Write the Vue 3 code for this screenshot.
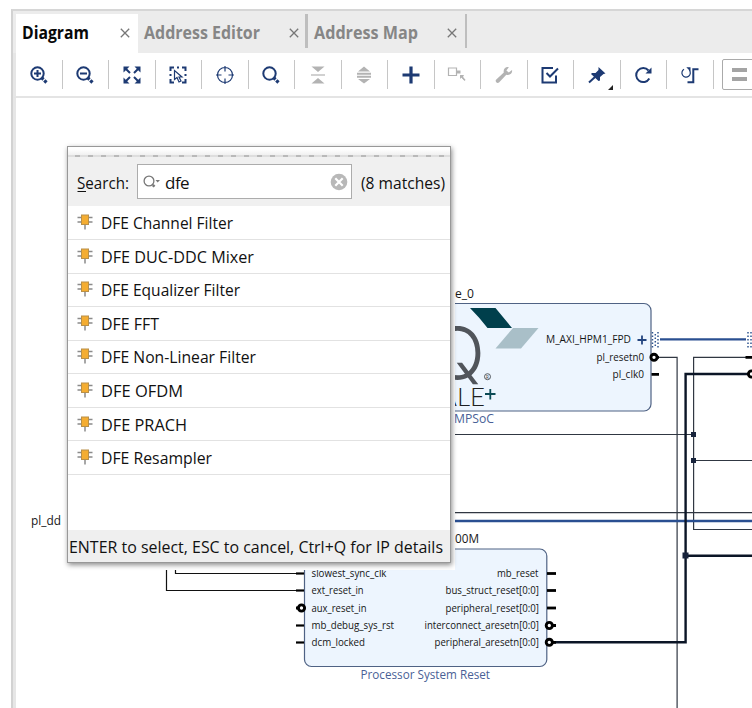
<template>
  <div class="window">
    <nav class="tabs">
      <div
        v-for="tab in tabs"
        :key="tab.title"
        :class="['tab', tab.name, { active: tab.title === activeTab }]"
        @click="activeTab = tab.title"
      >
        <svg class="tab-title" height="26" :width="tab.width">
          <text x="0" y="19" :textLength="tab.width" lengthAdjust="spacingAndGlyphs">{{ tab.title }}</text>
        </svg>
        <svg class="close" viewBox="0 0 10 10"><path d="M0.8 0.8L9.2 9.2M9.2 0.8L0.8 9.2" /></svg>
      </div>
    </nav>

    <div class="toolbar">
      <div v-for="tool in tools" :key="tool.name" class="tool">
        <svg viewBox="0 0 20 20" :class="['icon', { disabled: tool.disabled }]">
          <path v-if="tool.thin" :d="tool.thin" class="thin" />
          <path v-if="tool.line" :d="tool.line" class="line" />
          <path v-if="tool.bold" :d="tool.bold" class="bold" />
          <path v-if="tool.fill" :d="tool.fill" class="fill" />
        </svg>
        <i v-if="tool.menu" class="corner"></i>
      </div>
      <div class="view-switch"><i></i><i></i></div>
    </div>

    <main class="canvas">
      <svg class="diagram" viewBox="16 98 736 610">
        <!-- blocks -->
        <rect class="block" x="400.5" y="303.5" width="250.5" height="107.5" rx="7" />
        <rect class="block" x="304.5" y="549" width="242.3" height="117.5" rx="7" />

        <!-- logo on the processor block -->
        <path d="M470 308H495.500L512 328H487.500Q479 317 470 308Z" fill="#003f4c" />
        <path d="M513 328H538.500L521 348.500H495.500Z" fill="#a9bfc8" />
        <text class="logo-q" x="430" y="378.500" textLength="55" lengthAdjust="spacingAndGlyphs">Q</text>
        <circle cx="487.500" cy="376.700" r="3" fill="none" stroke="#444a50" stroke-width="0.9" />
        <text x="486" y="378.500" class="reg">R</text>
        <text class="logo-ale" x="440" y="405.500" textLength="45" lengthAdjust="spacingAndGlyphs">ALE</text>
        <path d="M485 394H495.500M490.300 389V399.500" stroke="#0b4a55" stroke-width="1.8" />

        <!-- wires -->
        <path class="wire" d="M658 357.300H677.100V708" />
        <path class="wire" d="M752 357.300H693.600V529.500H752M440 434.500H693.600M693.600 460.500H752M440 512.600H752" />
        <path class="wire dark" d="M175.500 560V573.500H300M166.500 560V590.500H300" />
        <path class="bus" d="M660 339.300H746" />
        <path class="bus" d="M440 521H752" />
        <path class="thick" d="M552 642.300H685.600V374H749M685.600 555.700H752" />
        <rect class="joint" x="691" y="432" width="5" height="5" />
        <rect class="joint" x="691" y="458" width="5" height="5" />
        <rect class="joint" x="682.500" y="552.500" width="6" height="6" />

        <!-- pins -->
        <path class="pin" d="M651.500 374.300H659M745.500 357.300H752" />
        <path v-for="y in [573.500, 590.500, 608]" :key="`r${y}`" class="pin" :d="`M547 ${y}H556`" />
        <path v-for="y in [573.500, 590.500, 625.500, 642.500]" :key="`l${y}`" class="pin left" :d="`M296 ${y}H304`" />
        <path class="pin" d="M296 608H300M552 625.500H556M552 642.300H556M656 357.300H659" />
        <circle v-for="c in invertedPins" :key="`${c.x}-${c.y}`" class="inverted" :cx="c.x" :cy="c.y" r="3.100" />
        <path class="expand" d="M637.500 340H646.500M642 335.500V344.500" />
        <path class="dots" d="M652.500 332V348M658 332V348M655.300 334V347M748 332V348M751 332V348" />

        <!-- labels -->
        <text
          v-for="l in labels"
          :key="l.text"
          :x="l.x"
          :y="l.y"
          :class="l.kind"
          :textLength="l.w"
          lengthAdjust="spacingAndGlyphs"
        >{{ l.text }}</text>

        <rect x="61" y="140" width="394" height="430" fill="#fff" />
      </svg>

      <section class="popup">
        <div class="grip"></div>
        <header class="search">
          <svg class="search-label" width="53" height="26">
            <text x="0" y="19" textLength="52" lengthAdjust="spacingAndGlyphs">Search:</text>
            <path d="M0.500 21.500H9" stroke="#111" />
          </svg>
          <div class="field">
            <svg class="lens" viewBox="0 0 18 16">
              <circle cx="6" cy="7" r="4.900" />
              <path d="M9.800 11L11.500 12.700" stroke-width="2.500" />
              <path d="M12.500 6H17L14.700 8.500Z" fill="#777" stroke="none" />
            </svg>
            <input v-model="query" spellcheck="false" />
            <svg class="clear" viewBox="0 0 18 18" @click="query = ''">
              <circle cx="9" cy="9" r="8.300" />
              <path d="M5.300 5.300L12.700 12.700M12.700 5.300L5.300 12.700" />
            </svg>
          </div>
          <svg class="count" width="84" height="26">
            <text x="0" y="19" textLength="84" lengthAdjust="spacingAndGlyphs">({{ matches.length }} matches)</text>
          </svg>
        </header>
        <ul class="results">
          <li v-for="item in matches" :key="item.name">
            <svg class="chip" viewBox="0 0 16 16">
              <path d="M0.500 3.500H15.500M0.500 8H15.500M8 10V15.500" />
              <rect x="4.500" y="1" width="7" height="9.500" />
            </svg>
            <svg height="26" :width="item.width + 2">
              <text x="0" y="19" :textLength="item.width" lengthAdjust="spacingAndGlyphs">{{ item.name }}</text>
            </svg>
          </li>
        </ul>
        <footer class="hint">
          <svg width="376" height="26">
            <text x="0" y="19" textLength="374" lengthAdjust="spacingAndGlyphs">ENTER to select, ESC to cancel, Ctrl+Q for IP details</text>
          </svg>
        </footer>
      </section>
    </main>
  </div>
</template>

<script setup>
import { computed, ref } from 'vue';

const activeTab = ref('Diagram');
const query = ref('dfe');

const tabs = [
  { name: 'diagram-tab', title: 'Diagram', width: 67 },
  { name: 'editor-tab', title: 'Address Editor', width: 116 },
  { name: 'map-tab', title: 'Address Map', width: 104 },
];

const lens = 'M8.500 2.300A6.200 6.200 0 1 1 8.500 14.700A6.200 6.200 0 1 1 8.500 2.300';
const handle = 'M13 13L14.500 14.500M15.300 15.300L17.500 17.500';

const tools = [
  { name: 'zoom-in', line: `${lens}M5 8.500H12M8.500 5V12`, bold: handle },
  { name: 'zoom-out', line: `${lens}M5 8.500H12`, bold: handle },
  {
    name: 'fit',
    line: 'M3 3L8 8M17 3L12 8M3 17L8 12M17 17L12 12',
    fill: 'M1.500 1.500H7.500L1.500 7.500ZM18.500 1.500V7.500L12.500 1.500ZM1.500 18.500V12.500L7.500 18.500ZM18.500 18.500H12.500L18.500 12.500Z',
  },
  {
    name: 'select-area',
    line: 'M2.500 6V2.500H6M14 2.500H17.500V6M17.500 14V17.500H14M6 17.500H2.500V14M2.500 9V11M17.500 9V11M9 2.500H11',
    thin: 'M6.500 5.500V14.500L9 12.500L11 17L13 16L11 12H14Z',
  },
  { name: 'center', thin: 'M10 2.500A7.500 7.500 0 1 1 10 17.500A7.500 7.500 0 1 1 10 2.500M10 1V6.500M10 13.500V19M1 10H6.500M13.500 10H19' },
  { name: 'find', line: lens, bold: handle },
  { name: 'collapse', disabled: true, thin: 'M3 10H17', fill: 'M3.500 1.500H16.500L10 7ZM3.500 18.500H16.500L10 13Z' },
  { name: 'expand', disabled: true, line: 'M3 8.700H17M3 11.700H17', fill: 'M4 6.500H16L10 1.500ZM4 14H16L10 18.500Z' },
  { name: 'add', bold: 'M1.500 10H18.500M10 1.500V18.500' },
  { name: 'make-external', disabled: true, thin: 'M1.500 3H9.500V10.500H1.500ZM10 7H13M14 11L18 15.500', fill: 'M10 5.500H13.500V8.500H10ZM13 10H17L16 12L18.500 15H17L14.500 12.500L13 14Z' },
  { name: 'settings', disabled: true, fill: 'M18 5L14.800 7.500L12.400 5.500L14.800 2.200C11.500 1.500 9 4 9.800 7.500L2 14.700C0.800 16.500 3 19 5 17.500L12.300 9.800C16 10.700 18.800 8.200 18 5Z' },
  { name: 'validate', line: 'M13 3H2.500V17.500H16V10.500M6.500 8L10 11.500L18 3.500' },
  { name: 'pin', menu: true, line: 'M2 17.500L8 12', fill: 'M11.500 2L18.500 8.500L16.500 9L13 12L13 15.500L11.500 16L4 9L5 8L8.500 8L11.500 5Z' },
  { name: 'refresh', line: 'M16.300 13.500A7 7 0 1 1 15.500 5.500', fill: 'M18.500 2.500V8.500H12.500Z' },
  { name: 'regenerate', line: 'M7.500 17.300H13.300V4.200H18.500', thin: 'M4 4.300A4.200 4.200 0 1 0 9.300 5.200', fill: 'M6.300 2.300H10.500V6.500Z' },
];

const catalog = [
  { name: 'DFE Channel Filter', width: 132 },
  { name: 'DFE DUC-DDC Mixer', width: 153 },
  { name: 'DFE Equalizer Filter', width: 139 },
  { name: 'DFE FFT', width: 58 },
  { name: 'DFE Non-Linear Filter', width: 155 },
  { name: 'DFE OFDM', width: 82 },
  { name: 'DFE PRACH', width: 86 },
  { name: 'DFE Resampler', width: 111 },
];
const matches = computed(() =>
  catalog.filter((item) => item.name.toLowerCase().includes(query.value.toLowerCase()))
);

const invertedPins = [
  { x: 654, y: 357.3 },
  { x: 751.5, y: 374 },
  { x: 301.5, y: 608 },
  { x: 549.3, y: 625.5 },
  { x: 549.3, y: 642.3 },
];

const labels = [
  { text: 'e_0', x: 455, y: 298, w: 19, kind: 'name' },
  { text: '00M', x: 455, y: 543, w: 24, kind: 'name' },
  { text: 'pl_dd', x: 31, y: 525, w: 30, kind: 'name' },
  { text: 'MPSoC', x: 454, y: 423, w: 40, kind: 'caption' },
  { text: 'Processor System Reset', x: 360.5, y: 679, w: 129.5, kind: 'caption' },
  { text: 'M_AXI_HPM1_FPD', x: 546, y: 343, w: 85, kind: 'port' },
  { text: 'pl_resetn0', x: 596.5, y: 360.5, w: 47.5, kind: 'port' },
  { text: 'pl_clk0', x: 612.5, y: 378, w: 31.5, kind: 'port' },
  { text: 'slowest_sync_clk', x: 311.5, y: 577, w: 75, kind: 'port' },
  { text: 'ext_reset_in', x: 311.5, y: 594, w: 52, kind: 'port' },
  { text: 'aux_reset_in', x: 311.5, y: 611.5, w: 55, kind: 'port' },
  { text: 'mb_debug_sys_rst', x: 311.5, y: 629, w: 82.5, kind: 'port' },
  { text: 'dcm_locked', x: 311.5, y: 646, w: 53.5, kind: 'port' },
  { text: 'mb_reset', x: 497, y: 577, w: 41.5, kind: 'port' },
  { text: 'bus_struct_reset[0:0]', x: 445.5, y: 594, w: 93.5, kind: 'port' },
  { text: 'peripheral_reset[0:0]', x: 445.5, y: 611.5, w: 93.5, kind: 'port' },
  { text: 'interconnect_aresetn[0:0]', x: 424.5, y: 629, w: 114.5, kind: 'port' },
  { text: 'peripheral_aresetn[0:0]', x: 434.5, y: 646, w: 104.5, kind: 'port' },
];
</script>

<style>
body {
  overflow: hidden;
  background: #fff;
}
</style>

<style scoped>
.window {
  box-sizing: border-box;
  width: 741px;
  height: 699px;
  margin: 9px 0 0 11px;
  border-top: 2px solid #d6d6d6;
  border-left: 2px solid #d2d2d2;
  display: flex;
  flex-direction: column;
  font-family: 'Open Sans', 'Noto Sans', sans-serif;
}
.tabs {
  display: flex;
  box-sizing: border-box;
  height: 42px;
  padding: 3px 0 0 3px;
  background: #ececec;
}
.tab {
  display: flex;
  align-items: center;
  justify-content: space-between;
  box-sizing: border-box;
  height: 34px;
  padding: 4px 8px 0 6px;
  border-right: 3px solid #bebebe;
}
.tab.active {
  height: 39px;
  padding-bottom: 5px;
  background: #fff;
  border-right: 0;
}
.diagram-tab {
  width: 122px;
}
.editor-tab {
  width: 170px;
  padding-right: 6.500px;
}
.map-tab {
  width: 159px;
  border-right-width: 2px;
}
.tab-title {
  overflow: visible;
  font-size: 17.500px;
  font-weight: 700;
  fill: #868686;
}
.active .tab-title {
  fill: #080808;
}
.close {
  width: 10px;
  height: 10px;
  fill: none;
  stroke: #777;
  stroke-width: 1.3;
}
.toolbar {
  display: flex;
  align-items: center;
  box-sizing: border-box;
  height: 45px;
  border-left: 3px solid #e6e6e6;
  border-bottom: 2px solid #e4e4e4;
  overflow: hidden;
}
.tool {
  position: relative;
  display: flex;
  flex: none;
  align-items: center;
  justify-content: center;
  box-sizing: border-box;
  width: 46.520px;
  height: 29px;
  border-right: 1px solid #c6c6c6;
}
.icon {
  width: 20px;
  height: 20px;
  color: #1d3a73;
}
.icon.disabled {
  color: #b3b3b3;
}
.icon path {
  fill: none;
  stroke: currentColor;
  stroke-width: 2;
}
.icon .thin {
  stroke-width: 1.2;
}
.icon .bold {
  stroke-width: 3.2;
}
.icon .fill {
  fill: currentColor;
  stroke: none;
}
.corner {
  position: absolute;
  right: 7px;
  bottom: -1px;
  border-left: 5px solid transparent;
  border-bottom: 5px solid #222;
}
.view-switch {
  display: flex;
  flex: none;
  flex-direction: column;
  gap: 5px;
  justify-content: center;
  box-sizing: border-box;
  width: 50px;
  height: 31px;
  margin-left: 8px;
  padding-left: 9px;
  border: 1px solid #aaa;
  border-radius: 2px;
}
.view-switch i {
  width: 15px;
  height: 4px;
  background: #a4a4a4;
}
.canvas {
  position: relative;
  flex: 1;
  border-left: 3px solid #e6e6e6;
}
.diagram {
  display: block;
  width: 736px;
  height: 610px;
}
.block {
  fill: #edf5fe;
  stroke: #4f6284;
  stroke-width: 1.2;
}
.logo-q {
  font: 300 72px Inter, Lato, sans-serif;
  fill: #51555b;
}
.logo-ale {
  font: 300 25px Lato, 'Open Sans', sans-serif;
  fill: #1d1f21;
}
.reg {
  font-size: 4.500px;
  fill: #333;
}
.wire,
.bus,
.thick,
.pin,
.inverted,
.expand,
.dots {
  fill: none;
  stroke: #303742;
  stroke-width: 1.2;
}
.wire.dark {
  stroke: #111;
}
.bus {
  stroke: #2a4f91;
  stroke-width: 2.3;
}
.thick {
  stroke: #0b1526;
  stroke-width: 2.4;
}
.joint {
  fill: #17233b;
}
.pin {
  stroke: #000;
  stroke-width: 2.8;
}
.pin.left {
  stroke-width: 2.2;
}
.inverted {
  fill: #fff;
  stroke: #000;
  stroke-width: 2.9;
}
.expand {
  stroke: #24457f;
  stroke-width: 1.8;
}
.dots {
  stroke: #315691;
  stroke-width: 1.5;
  stroke-dasharray: 1.5 2;
}
.name {
  font-size: 12px;
  fill: #181818;
}
.caption {
  font-size: 12px;
  fill: #4a5f96;
}
.port {
  font-size: 10.500px;
  fill: #151515;
}
.popup {
  position: absolute;
  top: 48px;
  left: 51px;
  display: flex;
  flex-direction: column;
  box-sizing: border-box;
  width: 384px;
  height: 417px;
  border: 1px solid #989898;
  background: #fff;
  box-shadow: 1px 2px 5px rgba(0, 0, 0, 0.45);
  font-size: 17px;
  fill: #111;
}
.popup svg {
  flex: none;
  overflow: visible;
}
.grip {
  height: 10px;
  box-sizing: border-box;
  background:
    repeating-linear-gradient(90deg, #dedede 0 7px, #b9b9b9 7px 12px, #dedede 12px 13px) 0 8px / 100% 2px no-repeat,
    linear-gradient(#fff 20%, #ebebeb);
}
.search {
  display: flex;
  align-items: center;
  box-sizing: border-box;
  height: 49px;
  padding: 0 5px 0 9px;
  background: #f0f0f0;
}
.search-label {
  margin-top: 3px;
}
.field {
  display: flex;
  flex: none;
  align-items: center;
  box-sizing: border-box;
  width: 215px;
  height: 35px;
  margin: 0 9px 0 7px;
  padding: 0 3px 0 5px;
  border: 1px solid #acacac;
  background: #fff;
}
.lens {
  width: 18px;
  height: 16px;
  fill: none;
  stroke: #777;
  stroke-width: 1.3;
}
.field input {
  flex: 1;
  min-width: 0;
  padding: 1px 0 0 4px;
  border: 0;
  outline: 0;
  background: none;
  color: #111;
  font: 17px 'Open Sans', sans-serif;
  letter-spacing: -0.5px;
}
.clear {
  width: 18px;
  height: 18px;
  fill: #b8b8b8;
  stroke: #fff;
  stroke-width: 2.2;
}
.clear circle {
  stroke: none;
}
.count {
  margin-top: 3px;
}
.results {
  flex: 1;
  margin: 0;
  padding: 0.500px 0 0;
  list-style: none;
}
.results li {
  display: flex;
  align-items: center;
  gap: 8px;
  box-sizing: border-box;
  height: 33.550px;
  padding: 1px 0 0 9px;
  border-bottom: 1px solid #e2e2e2;
}
.results .chip {
  width: 16px;
  height: 16px;
  margin-top: -2px;
  fill: none;
  stroke: #8b8b8b;
  stroke-width: 1.5;
}
.chip rect {
  fill: #f4ad32;
  stroke: #b99048;
  stroke-width: 1;
}
.hint {
  display: flex;
  align-items: center;
  box-sizing: border-box;
  height: 32px;
  padding: 1px 0 0 1px;
  background: #efefef;
}
</style>
